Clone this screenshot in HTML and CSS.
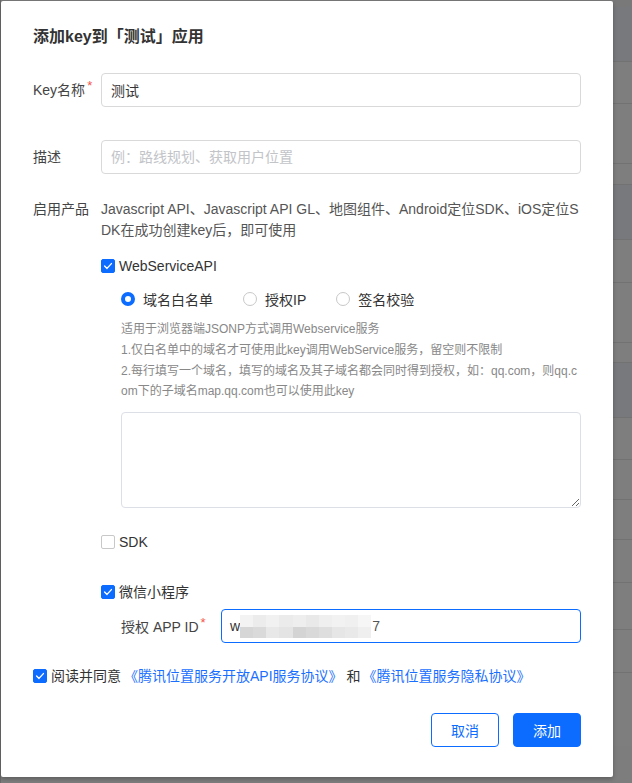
FILE: index.html
```html
<!DOCTYPE html>
<html lang="zh-CN">
<head>
<meta charset="utf-8">
<title>添加key</title>
<link rel="stylesheet" href="styles.css">
</head>
<body>
<div class="backdrop">
  <div class="bg-row h7 top"></div>
  <div class="bg-row h55 band"></div>
  <div class="bg-row h42"></div>
  <div class="bg-row h60"></div>
  <div class="bg-row h21"></div>
  <div class="bg-row h55 band"></div>
  <div class="bg-row h43"></div>
  <div class="bg-row h60"></div>
  <div class="bg-row h20"></div>
  <div class="bg-row h55 band"></div>
  <div class="bg-row h42"></div>
  <div class="bg-row h40"></div>
  <div class="bg-row h40"></div>
  <div class="bg-row h43"></div>
  <div class="bg-row h47"></div>
  <div class="bg-row h43"></div>
  <div class="bg-row h37"></div>
</div>

<div class="modal">
  <h1 class="title">添加key到「测试」应用</h1>

  <div class="form-item item-key">
    <label class="label">Key名称<span class="req">*</span></label>
    <div class="control">
      <input class="input" type="text" value="测试">
    </div>
  </div>

  <div class="form-item item-desc">
    <label class="label">描述</label>
    <div class="control">
      <input class="input" type="text" placeholder="例：路线规划、获取用户位置">
    </div>
  </div>

  <div class="form-item item-products">
    <label class="label label-text">启用产品</label>
    <div class="control">
      <p class="products-desc">Javascript API、Javascript API GL、地图组件、Android定位SDK、iOS定位SDK在成功创建key后，即可使用</p>

      <div class="check-row row-ws">
        <span class="checkbox checked"><svg viewBox="0 0 14 14"><path d="M3.6 7.1 L6 9.4 L10.4 4.6"/></svg></span>
        <span class="check-text">WebServiceAPI</span>
      </div>

      <div class="sub">
        <div class="radios">
          <span class="radio-item"><span class="radio on"></span>域名白名单</span>
          <span class="radio-item"><span class="radio"></span>授权IP</span>
          <span class="radio-item"><span class="radio"></span>签名校验</span>
        </div>
        <div class="help">
          <p>适用于浏览器端JSONP方式调用Webservice服务</p>
          <p>1.仅白名单中的域名才可使用此key调用WebService服务，留空则不限制</p>
          <p>2.每行填写一个域名，填写的域名及其子域名都会同时得到授权，如：qq.com，则qq.com下的子域名map.qq.com也可以使用此key</p>
        </div>
        <textarea class="textarea"></textarea>
      </div>

      <div class="check-row row-sdk">
        <span class="checkbox"></span>
        <span class="check-text">SDK</span>
      </div>

      <div class="check-row row-wx">
        <span class="checkbox checked"><svg viewBox="0 0 14 14"><path d="M3.6 7.1 L6 9.4 L10.4 4.6"/></svg></span>
        <span class="check-text">微信小程序</span>
      </div>

      <div class="appid-row">
        <label class="appid-label">授权 APP ID<span class="req">*</span></label>
        <div class="input focus appid-input">
          <span class="val">w</span>
          <span class="mosaic">
            <i class="m1"></i><i class="m2"></i><i class="m3"></i><i class="m4"></i><i class="m5"></i><i class="m6"></i><i class="m7"></i><i class="m8"></i><i class="m9"></i><i class="m10"></i>
            <i class="n1"></i><i class="n2"></i><i class="n3"></i><i class="n4"></i><i class="n5"></i><i class="n6"></i><i class="n7"></i><i class="n8"></i><i class="n9"></i><i class="n10"></i>
          </span>
          <span class="val tail">7</span>
        </div>
      </div>
    </div>
  </div>

  <div class="check-row agree">
    <span class="checkbox checked"><svg viewBox="0 0 14 14"><path d="M3.6 7.1 L6 9.4 L10.4 4.6"/></svg></span>
    <span class="check-text">阅读并同意</span>
    <a class="link first">《腾讯位置服务开放API服务协议》</a>
    <span class="check-text and">和</span>
    <a class="link">《腾讯位置服务隐私协议》</a>
  </div>

  <div class="footer">
    <button class="btn btn-outline">取消</button>
    <button class="btn btn-primary">添加</button>
  </div>
</div>
</body>
</html>
```

FILE: styles.css
```css
* { box-sizing: border-box; }

html, body {
  margin: 0;
  padding: 0;
}

body {
  width: 632px;
  height: 783px;
  overflow: hidden;
  position: relative;
  background: #7d7d7d;
  font-family: "Liberation Sans", "Noto Sans CJK SC", sans-serif;
  font-size: 14px;
  color: #333;
}

/* page behind the mask */
.backdrop {
  display: flex;
  flex-direction: column;
  border-left: 1px solid #6a6a6a;
  height: 783px;
}
.bg-row {
  border-bottom: 1px solid #727272;
  background: #7e7e7e;
  flex: none;
}
.bg-row.top { background: #797979; border-bottom: none; }
.bg-row.band { background: #77797c; }
.h7 { height: 7px; }
.h20 { height: 20px; }
.h21 { height: 21px; }
.h37 { height: 73px; border-bottom: none; }
.h40 { height: 40px; }
.h42 { height: 42px; }
.h43 { height: 43px; }
.h47 { height: 47px; }
.h55 { height: 55px; }
.h60 { height: 60px; }

/* dialog */
.modal {
  position: absolute;
  left: 1px;
  top: 1px;
  width: 612px;
  height: 776px;
  background: #fff;
  border-radius: 2px;
  box-shadow: 0 2px 4px rgba(0, 0, 0, 0.25);
  padding: 24px 32px 0 32px;
}

.title {
  margin: 0;
  font-size: 16px;
  line-height: 24px;
  font-weight: bold;
  color: #333;
}

.form-item {
  display: flex;
  align-items: flex-start;
}
.item-key { margin-top: 24px; }
.item-desc { margin-top: 32px; }
.item-products { margin-top: 25px; }

.label {
  width: 68px;
  flex: none;
  line-height: 34px;
  color: #444;
  white-space: nowrap;
  position: relative;
}
.label.label-text { line-height: 21px; }

.req {
  color: #f5554a;
  font-size: 13px;
  position: relative;
  top: -5px;
  margin-left: 2px;
}

.control {
  flex: 1;
  min-width: 0;
}

.input {
  display: block;
  width: 100%;
  height: 34px;
  border: 1px solid #d9d9d9;
  border-radius: 4px;
  padding: 0 9px;
  font-family: inherit;
  font-size: 14px;
  color: #333;
  outline: none;
  background: #fff;
}
.input::placeholder { color: #c2c4c8; }

.products-desc {
  margin: 0;
  line-height: 21px;
  color: #555;
  word-break: break-all;
}

.check-row {
  display: flex;
  align-items: center;
  height: 20px;
  line-height: 20px;
}
.row-ws { margin-top: 15px; }
.row-sdk { margin-top: 24px; }
.row-wx { margin-top: 30px; }

.checkbox {
  width: 14px;
  height: 14px;
  flex: none;
  border: 1px solid #c8c8c8;
  border-radius: 2px;
  background: #fff;
  margin-right: 4px;
  display: flex;
  align-items: center;
  justify-content: center;
}
.checkbox.checked {
  background: #0b6cff;
  border-color: #0b6cff;
}
.checkbox svg {
  width: 14px;
  height: 14px;
  flex: none;
}
.checkbox svg path {
  fill: none;
  stroke: #fff;
  stroke-width: 1.4;
  stroke-linecap: round;
  stroke-linejoin: round;
}
.check-text { color: #333; }

.sub {
  padding-left: 20px;
}

.radios {
  display: flex;
  align-items: center;
  height: 20px;
  margin-top: 13px;
}
.radio-item {
  display: flex;
  align-items: center;
  color: #333;
  margin-right: 30px;
}
.radio {
  width: 14px;
  height: 14px;
  border-radius: 50%;
  border: 1px solid #c8c8c8;
  background: #fff;
  margin-right: 8px;
  flex: none;
}
.radio.on {
  border: 4px solid #0b6cff;
}

.help {
  margin-top: 10px;
  font-size: 12px;
  color: #888;
  line-height: 20px;
  word-break: break-all;
}
.help p {
  margin: 0 0 1px 0;
}

.textarea {
  display: block;
  width: 100%;
  height: 96px;
  margin-top: 11px;
  border: 1px solid #dcdfe6;
  border-radius: 4px;
  font-family: inherit;
  font-size: 14px;
  outline: none;
  resize: vertical;
}

.appid-row {
  display: flex;
  align-items: center;
  margin-top: 7px;
  padding-left: 20px;
}
.appid-label {
  width: 100px;
  flex: none;
  color: #444;
  white-space: nowrap;
}
.appid-input {
  flex: 1;
  display: flex;
  align-items: center;
  border-color: #0b6cff;
  padding: 0 8px;
}
.val { color: #333; }
.val.tail { color: #555; margin-left: 1px; }

.mosaic {
  display: grid;
  grid-template-columns: repeat(10, 1fr);
  grid-template-rows: 12px 11px;
  width: 131px;
  height: 23px;
  margin-top: 1px;
}
.mosaic i { display: block; }
.m1 { background: #f3f3f3; }
.m2 { background: #ececec; }
.m3 { background: #f1f1f1; }
.m4 { background: #ebebeb; }
.m5 { background: #eeeeee; }
.m6 { background: #e9e9e9; }
.m7 { background: #efefef; }
.m8 { background: #f2f2f2; }
.m9 { background: #f0f0f0; }
.m10 { background: #f6f6f6; }
.n1 { background: #d6d6d6; }
.n2 { background: #dadada; }
.n3 { background: #e8e8e8; }
.n4 { background: #e4e4e4; }
.n5 { background: #d4d4d4; }
.n6 { background: #d9d9d9; }
.n7 { background: #dedede; }
.n8 { background: #e6e6e6; }
.n9 { background: #e9e9e9; }
.n10 { background: #efefef; }

.agree {
  margin-top: 23px;
}
.link {
  color: #1a6fff;
  text-decoration: none;
  cursor: pointer;
}
.link.first { margin-left: 3px; }
.check-text.and { margin: 0 2px 0 4px; }

.footer {
  display: flex;
  justify-content: flex-end;
  gap: 14px;
  margin-top: 27px;
}
.btn {
  width: 68px;
  height: 34px;
  border-radius: 4px;
  font-family: inherit;
  font-size: 14px;
  cursor: pointer;
  padding: 0;
}
.btn-outline {
  background: #fff;
  border: 1px solid #0b6cff;
  color: #0b6cff;
}
.btn-primary {
  background: #0b6cff;
  border: 1px solid #0b6cff;
  color: #fff;
}
```
